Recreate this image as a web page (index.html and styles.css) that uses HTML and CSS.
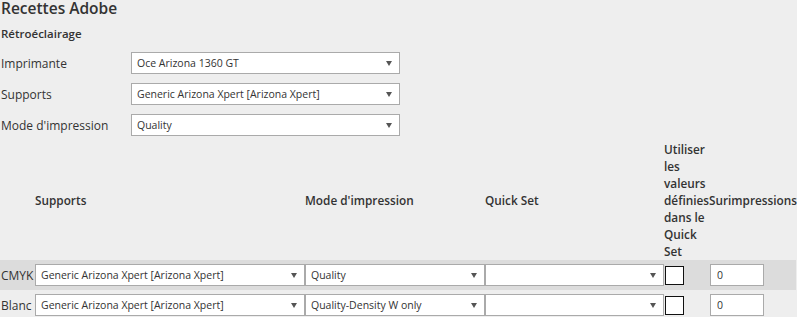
FILE: index.html
```
<!DOCTYPE html>
<html lang="fr">
<head>
    <meta charset="UTF-8">
    <title>Recettes Adobe</title>
    <link rel="stylesheet" href="styles.css">
</head>
<body>
    <h1 class="page-title">Recettes Adobe</h1>
    <h2 class="section-title">Rétroéclairage</h2>

    <div class="settings">
        <label>Imprimante</label>
        <span class="select-wrap">
            <select class="field"><option>Oce Arizona 1360 GT</option></select>
        </span>
        <label>Supports</label>
        <span class="select-wrap">
            <select class="field"><option>Generic Arizona Xpert [Arizona Xpert]</option></select>
        </span>
        <label>Mode d'impression</label>
        <span class="select-wrap">
            <select class="field"><option>Quality</option></select>
        </span>
    </div>

    <table class="recipes">
        <colgroup>
            <col class="col-name">
            <col class="col-media">
            <col class="col-mode">
            <col class="col-quick">
            <col class="col-use">
            <col class="col-over">
        </colgroup>
        <thead>
            <tr>
                <th></th>
                <th>Supports</th>
                <th>Mode d'impression</th>
                <th>Quick Set</th>
                <th>Utiliser les valeurs définies dans le Quick Set</th>
                <th>Surimpressions</th>
            </tr>
        </thead>
        <tbody>
            <tr class="alt">
                <td>CMYK</td>
                <td><span class="select-wrap"><select class="field"><option>Generic Arizona Xpert [Arizona Xpert]</option></select></span></td>
                <td><span class="select-wrap"><select class="field"><option>Quality</option></select></span></td>
                <td><span class="select-wrap"><select class="field"><option></option></select></span></td>
                <td><input type="checkbox" class="check"></td>
                <td><input type="text" class="num" value="0"></td>
            </tr>
            <tr>
                <td>Blanc</td>
                <td><span class="select-wrap"><select class="field"><option>Generic Arizona Xpert [Arizona Xpert]</option></select></span></td>
                <td><span class="select-wrap"><select class="field"><option>Quality-Density W only</option></select></span></td>
                <td><span class="select-wrap"><select class="field"><option></option></select></span></td>
                <td><input type="checkbox" class="check"></td>
                <td><input type="text" class="num" value="0"></td>
            </tr>
        </tbody>
    </table>
</body>
</html>
```

FILE: styles.css
```
body {
    margin: 0;
    padding: 0 0 0 1px;
    font-family: "Open Sans", "Noto Sans", sans-serif;
    font-size: 12px;
    color: #333;
    background-color: #eeeeee;
}
.page-title {
    margin: 0;
    padding-top: 2px;
    font-size: 15.5px;
    font-weight: 600;
    line-height: 12px;
}
.section-title {
    margin: 12px 0 0;
    font-size: 11.5px;
    font-weight: 600;
    line-height: 16px;
}
.settings {
    display: grid;
    grid-template-columns: 130px 269px;
    row-gap: 9px;
    align-items: center;
    margin-top: 10px;
}
.select-wrap {
    position: relative;
    display: block;
}
.select-wrap::after {
    content: "";
    position: absolute;
    right: 8px;
    top: 9px;
    border-left: 3px solid transparent;
    border-right: 3px solid transparent;
    border-top: 5px solid #555;
    pointer-events: none;
}
.field {
    -webkit-appearance: none;
    appearance: none;
    display: block;
    width: 100%;
    height: 22px;
    margin: 0;
    padding: 0 18px 0 5px;
    border: 1px solid #aaa;
    border-radius: 0;
    background-color: white;
    font-family: inherit;
    font-size: 10.5px;
    color: #333;
}
.recipes {
    border-collapse: collapse;
    table-layout: fixed;
    width: 796px;
    margin: 5px 0 0 -1px;
}
.col-name { width: 35px; }
.col-media { width: 270px; }
.col-mode { width: 180px; }
.col-quick { width: 179px; }
.col-use { width: 45px; }
.recipes th {
    padding: 0;
    text-align: left;
    vertical-align: middle;
    font-weight: 600;
    font-size: 11.8px;
    line-height: 17px;
}
.recipes td {
    padding: 4px 0;
    vertical-align: middle;
    white-space: nowrap;
}
.recipes tr.alt td {
    background-color: #dcdcdc;
}
.recipes td:first-child {
    padding-left: 1px;
}
.check {
    -webkit-appearance: none;
    appearance: none;
    display: block;
    width: 19px;
    height: 19px;
    margin: 0 0 0 1px;
    border: 1px solid #111;
    background-color: white;
}
.num {
    display: block;
    width: 54px;
    height: 22px;
    box-sizing: border-box;
    margin-left: 1px;
    padding: 0 6px;
    border: 1px solid #aaa;
    font-family: inherit;
    font-size: 10.5px;
    color: #333;
}
```
